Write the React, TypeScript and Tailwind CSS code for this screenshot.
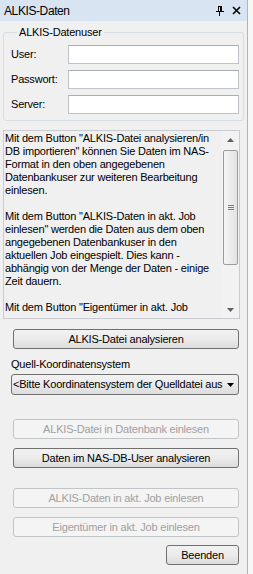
import React from "react";

const btnBase =
  "h-[20px] flex items-center justify-center rounded-[3px] border text-[11px] leading-none";
const btnOn =
  btnBase +
  " border-[#707070] bg-gradient-to-b from-[#f2f2f2] via-[#ebebeb] to-[#dcdcdc] text-black";
const btnOff = btnBase + " border-[#c2c5c8] bg-[#f4f4f4] text-[#a0a0a0]";

function Field({ label }: { label: string }) {
  return (
    <div className="flex items-center h-[19px]">
      <span className="w-[57px] text-[11px] text-black">{label}</span>
      <div className="w-[171px] h-[19px] bg-white border border-[#bfc3c9] border-t-[#a9adb4]" />
    </div>
  );
}

const lines = [
  'Mit dem Button "ALKIS-Datei analysieren/in',
  'DB importieren" können Sie Daten im NAS-',
  "Format in den oben angegebenen",
  "Datenbankuser zur weiteren Bearbeitung",
  "einlesen.",
  "",
  'Mit dem Button "ALKIS-Daten in akt. Job',
  'einlesen" werden die Daten aus dem oben',
  "angegebenen Datenbankuser in den",
  "aktuellen Job eingespielt. Dies kann -",
  "abhängig von der Menge der Daten - einige",
  "Zeit dauern.",
  "",
  'Mit dem Button "Eigentümer in akt. Job',
];

export default function App() {
  return (
    <div className="w-[253px] h-[574px] bg-[#f7f7f8] flex font-['Liberation_Sans',Arial,sans-serif] tracking-[-0.2px] overflow-hidden">
      <div className="w-[248px] h-full bg-[#f0f0f0] border-r border-[#b4b4b4] flex flex-col">
        {/* title bar */}
        <div className="h-[21px] bg-[#d8e4f1] flex items-center pl-[4px] pr-[6px]">
          <span className="text-[12px] tracking-[-0.4px] text-black flex-1">ALKIS-Daten</span>
          <svg width="8" height="10" viewBox="0 0 8 10" className="mr-[8px]">
            <rect x="2" y="0" width="4" height="1" fill="#000" />
            <rect x="2" y="0" width="1" height="5" fill="#000" />
            <rect x="4" y="0" width="2" height="5" fill="#000" />
            <rect x="0" y="5" width="8" height="1" fill="#000" />
            <rect x="3" y="6" width="1" height="4" fill="#000" />
          </svg>
          <svg width="9" height="9" viewBox="0 0 9 9">
            <path d="M1 1L8 8M8 1L1 8" stroke="#000" strokeWidth="1.6" />
          </svg>
        </div>

        {/* group box */}
        <fieldset className="mt-[5px] ml-[3px] w-[241px] border border-[#d5dde3] rounded-[3px] pl-[7px] pr-[4px] pt-[6px] pb-[6px]">
          <legend className="ml-[6px] px-[2px] text-[11px] leading-[13px] text-black">
            ALKIS-Datenuser
          </legend>
          <div className="flex flex-col gap-[6px]">
            <Field label="User:" />
            <Field label="Passwort:" />
            <Field label="Server:" />
          </div>
        </fieldset>

        {/* text area */}
        <div className="mt-[9px] ml-[3px] w-[237px] h-[189px] border border-[#c8ccd1] flex">
          <div className="flex-1 overflow-hidden pl-[1px] pt-[1px] text-[11px] leading-[13px] text-black">
            {lines.map((l, i) => (
              <div key={i} className="whitespace-nowrap h-[13px]">
                {l}
              </div>
            ))}
          </div>
          <div className="w-[17px] flex flex-col bg-[#f2f2f2]">
            <div className="h-[17px] flex items-center justify-center">
              <svg width="7" height="4" viewBox="0 0 7 4">
                <path d="M0 4L3.5 0L7 4Z" fill="#606060" />
              </svg>
            </div>
            <div className="mt-[2px] mx-[1px] h-[115px] rounded-[2px] border border-[#9c9c9c] bg-gradient-to-r from-[#f5f5f5] to-[#e2e2e2] flex flex-col items-center justify-center gap-[1px]">
              <div className="w-[6px] h-[1px] bg-[#7a7a7a]" />
              <div className="w-[6px] h-[1px] bg-[#7a7a7a]" />
              <div className="w-[6px] h-[1px] bg-[#7a7a7a]" />
            </div>
            <div className="flex-1" />
            <div className="h-[17px] flex items-center justify-center">
              <svg width="7" height="4" viewBox="0 0 7 4">
                <path d="M0 0L3.5 4L7 0Z" fill="#606060" />
              </svg>
            </div>
          </div>
        </div>

        <div className={btnOn + " mt-[10px] ml-[13px] w-[226px]"}>ALKIS-Datei analysieren</div>

        <div className="mt-[9px] ml-[11px] text-[11px] leading-[13px] text-black">
          Quell-Koordinatensystem
        </div>

        <div className="mt-[3px] ml-[11px] w-[228px] h-[21px] rounded-[3px] border border-[#707070] bg-gradient-to-b from-[#f2f2f2] via-[#ebebeb] to-[#dcdcdc] flex items-center">
          <span className="flex-1 whitespace-nowrap pl-[1px] text-[11px] text-black">
            &lt;Bitte Koordinatensystem der Quelldatei aus
          </span>
          <div className="w-[17px] h-full flex items-center justify-center">
            <svg width="7" height="4" viewBox="0 0 7 4">
              <path d="M0 0L3.5 4L7 0Z" fill="#000" />
            </svg>
          </div>
        </div>

        <div className={btnOff + " mt-[24px] ml-[13px] w-[226px]"}>ALKIS-Datei in Datenbank einlesen</div>
        <div className={btnOn + " mt-[9px] ml-[13px] w-[226px]"}>Daten im NAS-DB-User analysieren</div>
        <div className={btnOff + " mt-[20px] ml-[13px] w-[226px]"}>ALKIS-Daten in akt. Job einlesen</div>
        <div className={btnOff + " mt-[9px] ml-[13px] w-[226px]"}>Eigentümer in akt. Job einlesen</div>
        <div className={btnOn + " mt-[8px] self-end mr-[8px] w-[73px]"}>Beenden</div>
      </div>
    </div>
  );
}
